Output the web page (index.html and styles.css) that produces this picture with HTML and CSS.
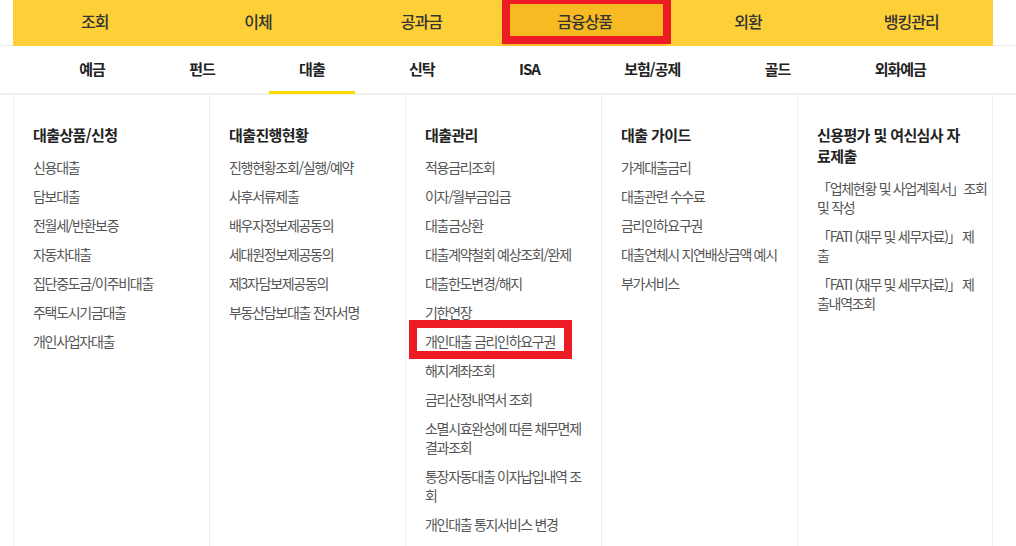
FILE: index.html
```html
<!DOCTYPE html>
<html lang="ko">
<head>
<meta charset="utf-8">
<title>금융상품 - 대출</title>
<link rel="stylesheet" href="styles.css">
</head>
<body>
<header class="gnb">
  <ul class="gnb-list">
    <li class="gnb-item"><a href="#">조회</a></li>
    <li class="gnb-item"><a href="#">이체</a></li>
    <li class="gnb-item"><a href="#">공과금</a></li>
    <li class="gnb-item is-active"><a href="#">금융상품</a></li>
    <li class="gnb-item"><a href="#">외환</a></li>
    <li class="gnb-item"><a href="#">뱅킹관리</a></li>
  </ul>
</header>
<nav class="lnb">
  <ul class="lnb-list">
    <li class="lnb-item"><a href="#">예금</a></li>
    <li class="lnb-item"><a href="#">펀드</a></li>
    <li class="lnb-item is-active"><a href="#">대출</a></li>
    <li class="lnb-item"><a href="#">신탁</a></li>
    <li class="lnb-item"><a href="#">ISA</a></li>
    <li class="lnb-item"><a href="#">보험/공제</a></li>
    <li class="lnb-item"><a href="#">골드</a></li>
    <li class="lnb-item"><a href="#">외화예금</a></li>
  </ul>
</nav>
<section class="mega">
  <div class="mega-col">
    <h3 class="mega-title">대출상품/신청</h3>
    <ul class="mega-links">
      <li><a href="#">신용대출</a></li>
      <li><a href="#">담보대출</a></li>
      <li><a href="#">전월세/반환보증</a></li>
      <li><a href="#">자동차대출</a></li>
      <li><a href="#">집단중도금/이주비대출</a></li>
      <li><a href="#">주택도시기금대출</a></li>
      <li><a href="#">개인사업자대출</a></li>
    </ul>
  </div>
  <div class="mega-col">
    <h3 class="mega-title">대출진행현황</h3>
    <ul class="mega-links">
      <li><a href="#">진행현황조회/실행/예약</a></li>
      <li><a href="#">사후서류제출</a></li>
      <li><a href="#">배우자정보제공동의</a></li>
      <li><a href="#">세대원정보제공동의</a></li>
      <li><a href="#">제3자담보제공동의</a></li>
      <li><a href="#">부동산담보대출 전자서명</a></li>
    </ul>
  </div>
  <div class="mega-col">
    <h3 class="mega-title">대출관리</h3>
    <ul class="mega-links">
      <li><a href="#">적용금리조회</a></li>
      <li><a href="#">이자/월부금입금</a></li>
      <li><a href="#">대출금상환</a></li>
      <li><a href="#">대출계약철회 예상조회/완제</a></li>
      <li><a href="#">대출한도변경/해지</a></li>
      <li><a href="#">기한연장</a></li>
      <li><a href="#" class="is-marked">개인대출 금리인하요구권</a></li>
      <li><a href="#">해지계좌조회</a></li>
      <li><a href="#">금리산정내역서 조회</a></li>
      <li><a href="#">소멸시효완성에 따른 채무면제<br>결과조회</a></li>
      <li><a href="#">통장자동대출 이자납입내역 조<br>회</a></li>
      <li><a href="#">개인대출 통지서비스 변경</a></li>
    </ul>
  </div>
  <div class="mega-col">
    <h3 class="mega-title">대출 가이드</h3>
    <ul class="mega-links">
      <li><a href="#">가계대출금리</a></li>
      <li><a href="#">대출관련 수수료</a></li>
      <li><a href="#">금리인하요구권</a></li>
      <li><a href="#">대출연체시 지연배상금액 예시</a></li>
      <li><a href="#">부가서비스</a></li>
    </ul>
  </div>
  <div class="mega-col">
    <h3 class="mega-title">신용평가 및 여신심사 자<br>료제출</h3>
    <ul class="mega-links">
      <li><a href="#">「업체현황 및 사업계획서」조회<br>및 작성</a></li>
      <li><a href="#">「FATI (재무 및 세무자료)」 제<br>출</a></li>
      <li><a href="#">「FATI (재무 및 세무자료)」 제<br>출내역조회</a></li>
    </ul>
  </div>
</section>
</body>
</html>
```

FILE: styles.css
```css
html, body {
  margin: 0;
  padding: 0;
  background: #fff;
}

body {
  font-family: "Noto Sans CJK KR", "Noto Sans", sans-serif;
  overflow: hidden;
}

ul {
  list-style: none;
  margin: 0;
  padding: 0;
}

a {
  color: inherit;
  text-decoration: none;
}

/* top menu */
.gnb {
  height: 45px;
  border-bottom: 1px solid #ececec;
}

.gnb-list {
  display: flex;
  margin-left: 13px;
  width: 980px;
  height: 46px;
  background: #fdd037;
}

.gnb-item {
  flex: 1 1 0;
  position: relative;
  text-align: center;
  font-size: 16px;
  line-height: 42px;
  font-weight: 500;
  letter-spacing: -1px;
  color: #333;
}

.gnb-item.is-active {
  background: #f8ba22;
}

.gnb-item.is-active::after {
  content: "";
  position: absolute;
  left: -1px;
  right: -5px;
  top: -4px;
  bottom: 2px;
  border: 8px solid #ed1c24;
}

/* second menu */
.lnb {
  height: 47px;
  border-bottom: 2px solid #f0f0f0;
}

.lnb-list {
  display: flex;
  box-sizing: border-box;
  margin-left: 13px;
  width: 979px;
  height: 47px;
  padding: 0 24px;
}

.lnb-item {
  flex: 1 1 auto;
  padding: 0 12px;
  text-align: center;
}

.lnb-item a {
  display: block;
  height: 45px;
  line-height: 45px;
  font-size: 15px;
  font-weight: 700;
  letter-spacing: -1px;
  color: #222;
}

.lnb-item.is-active a {
  border-bottom: 3px solid #ffd800;
}

/* mega menu */
.mega {
  display: grid;
  grid-template-columns: repeat(5, 1fr);
  margin-left: 13px;
  width: 980px;
}

.mega-col {
  min-height: 470px;
  padding: 29px 4px 0 19px;
  border-left: 1px solid #eeeeee;
}

.mega-col:last-child {
  border-right: 1px solid #eeeeee;
}

.mega-title {
  margin: 0 0 13px;
  font-size: 15px;
  font-weight: 700;
  line-height: 21px;
  letter-spacing: -0.6px;
  white-space: nowrap;
  color: #222;
}

.mega-links li {
  font-size: 14px;
  line-height: 19px;
  letter-spacing: -1.3px;
  white-space: nowrap;
  color: #555;
}

.mega-links li + li {
  margin-top: 10px;
}

.mega-links a {
  display: inline-block;
  vertical-align: top;
}

.mega-links a.is-marked {
  position: relative;
}

.mega-links a.is-marked::after {
  content: "";
  position: absolute;
  left: -16px;
  right: -17px;
  top: -12px;
  bottom: -8px;
  border: 8px solid #ed1c24;
}
```
